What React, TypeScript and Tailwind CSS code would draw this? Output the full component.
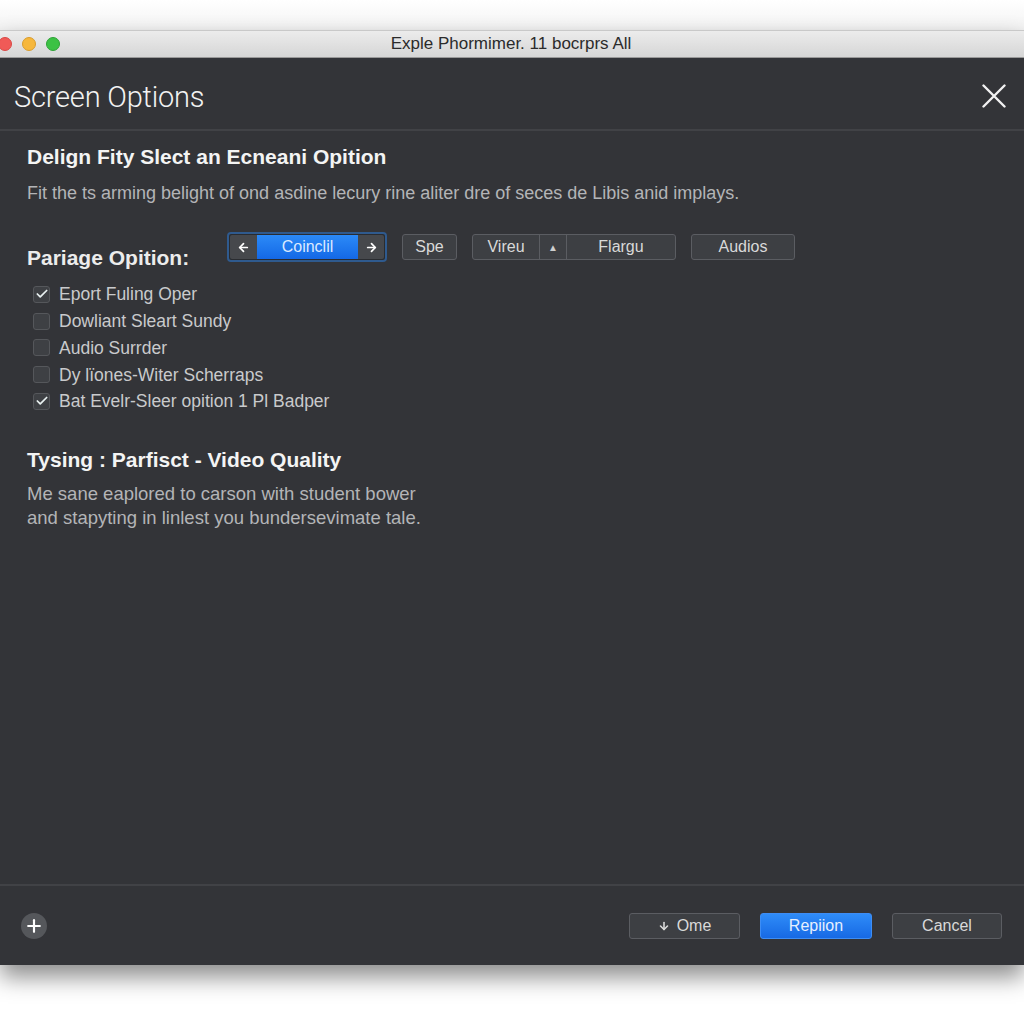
import { ArrowDown, ArrowLeft, ArrowRight, Check, Plus } from "lucide-react";

const checks = [
  { label: "Eport Fuling Oper", on: true },
  { label: "Dowliant Sleart Sundy", on: false },
  { label: "Audio Surrder", on: false },
  { label: "Dy lïones-Witer Scherraps", on: false },
  { label: "Bat Evelr-Sleer opition 1 Pl Badper", on: true },
];

const btn =
  "h-[26px] flex items-center justify-center rounded-[3px] border border-[#5b5d62] bg-[#3d3f43] text-[16px] text-[#d9d9d9]";

export default function App() {
  return (
    <div className="w-[1024px] h-[1024px] bg-white overflow-hidden flex flex-col font-['Liberation_Sans',Arial,sans-serif]">
      {/* top white strip */}
      <div className="h-[30px] shrink-0 bg-gradient-to-b from-white to-[#f3f3f3]" />

      {/* window */}
      <div className="h-[935px] shrink-0 flex flex-col shadow-[0_12px_22px_rgba(0,0,0,0.45)]">
        {/* title bar */}
        <div className="h-[28px] shrink-0 flex items-center bg-gradient-to-b from-[#ececec] to-[#d6d6d6] border-t border-[#c9c9c9] border-b border-b-[#9a9a9a]">
          <div className="flex items-center gap-[10px] -ml-[2px] w-[120px]">
            <span className="w-[14px] h-[14px] rounded-full bg-[#f05a57] border border-[#d94845]" />
            <span className="w-[14px] h-[14px] rounded-full bg-[#f6b73c] border border-[#d99c2c]" />
            <span className="w-[14px] h-[14px] rounded-full bg-[#3cc244] border border-[#2ea236]" />
          </div>
          <div className="flex-1 text-center text-[17px] text-[#2b2b2b] pr-[120px]">
            Exple Phormimer. 11 bocrprs All
          </div>
        </div>

        {/* body */}
        <div className="flex-1 flex flex-col bg-[#333438]">
          <div className="h-[73px] shrink-0 flex items-center justify-between pl-[14px] pr-[18px] border-b-2 border-[#414246]">
            <span className="text-[29px] text-[#f2f2f2] font-['Roboto',sans-serif] font-light tracking-[-0.2px] pt-[8px]">
              Screen Options
            </span>
            <svg width="24" height="24" viewBox="0 0 24 24" className="mt-[4px]">
              <path d="M1.5 1.5 L22.5 22.5 M22.5 1.5 L1.5 22.5" stroke="#f2f2f2" strokeWidth="2.4" strokeLinecap="round" />
            </svg>
          </div>

          <div className="flex-1 flex flex-col pl-[27px] pt-[14px]">
            <h1 className="text-[21px] leading-[24px] font-bold text-[#f4f4f4]">
              Delign Fity Slect an Ecneani Opition
            </h1>
            <p className="mt-[12px] text-[18px] leading-[24px] text-[#b3b4b7]">
              Fit the ts arming belight of ond asdine lecury rine aliter dre of seces de Libis anid implays.
            </p>

            <div className="mt-[27px] flex items-start">
              <span className="mt-[14px] w-[200px] text-[21px] leading-[24px] font-semibold text-[#ececec]">
                Pariage Opition:
              </span>
              <div className="flex items-center gap-[15px]">
                <div className="h-[30px] w-[160px] flex rounded-[4px] border-2 border-[#2f5a8e] bg-[#2a2c30] p-[1px]">
                  <div className="w-[27px] flex items-center justify-center bg-[#46484c] rounded-l-[2px] text-white">
                    <ArrowLeft size={13} strokeWidth={3.2} />
                  </div>
                  <div className="flex-1 flex items-center justify-center bg-gradient-to-b from-[#2c8af7] to-[#1468e6] text-[16px] text-[#dbe9ff]">
                    Coinclil
                  </div>
                  <div className="w-[26px] flex items-center justify-center bg-[#46484c] rounded-r-[2px] text-white">
                    <ArrowRight size={13} strokeWidth={3.2} />
                  </div>
                </div>
                <div className={btn + " w-[55px]"}>Spe</div>
                <div className="h-[26px] w-[204px] flex rounded-[3px] border border-[#5b5d62] bg-[#3d3f43] text-[16px] text-[#d9d9d9]">
                  <div className="w-[67px] flex items-center justify-center border-r border-[#5b5d62]">Vireu</div>
                  <div className="w-[27px] flex items-center justify-center border-r border-[#5b5d62] text-[10px] text-[#cfcfcf]">
                    ▲
                  </div>
                  <div className="flex-1 flex items-center justify-center">Flargu</div>
                </div>
                <div className={btn + " w-[104px]"}>Audios</div>
              </div>
            </div>

            <div className="mt-[11px] flex flex-col pl-[6px]">
              {checks.map((c) => (
                <div key={c.label} className="h-[26.75px] flex items-center gap-[9px]">
                  <span className="w-[17px] h-[17px] rounded-[3px] border border-[#55575b] bg-[#3e4044] flex items-center justify-center">
                    {c.on && <Check size={14} strokeWidth={3} className="text-[#e8f0f0]" />}
                  </span>
                  <span className="text-[17.5px] text-[#c9cacc]">{c.label}</span>
                </div>
              ))}
            </div>

            <h2 className="mt-[33px] text-[21px] leading-[24px] font-bold text-[#f4f4f4]">
              Tysing : Parfisct - Video Quality
            </h2>
            <p className="mt-[10px] text-[18.5px] leading-[24px] text-[#b3b4b7]">
              Me sane eaplored to carson with student bower
              <br />
              and stapyting in linlest you bundersevimate tale.
            </p>
          </div>

          {/* footer */}
          <div className="h-[81px] shrink-0 flex items-center justify-between pl-[21px] pr-[22px] border-t-2 border-[#414246]">
            <span className="w-[26px] h-[26px] rounded-full bg-[#55575b] flex items-center justify-center">
              <Plus size={20} strokeWidth={2.6} className="text-white" />
            </span>
            <div className="flex items-center gap-[20px]">
              <div className={btn + " w-[111px] gap-[7px]"}>
                <ArrowDown size={12} strokeWidth={3.2} />
                <span>Ome</span>
              </div>
              <div className="h-[26px] w-[112px] flex items-center justify-center rounded-[3px] border border-[#3d8df5] bg-gradient-to-b from-[#2f8cf8] to-[#1769e4] text-[16px] text-[#e6efff]">
                Repiion
              </div>
              <div className={btn + " w-[110px]"}>Cancel</div>
            </div>
          </div>
        </div>
      </div>
    </div>
  );
}
